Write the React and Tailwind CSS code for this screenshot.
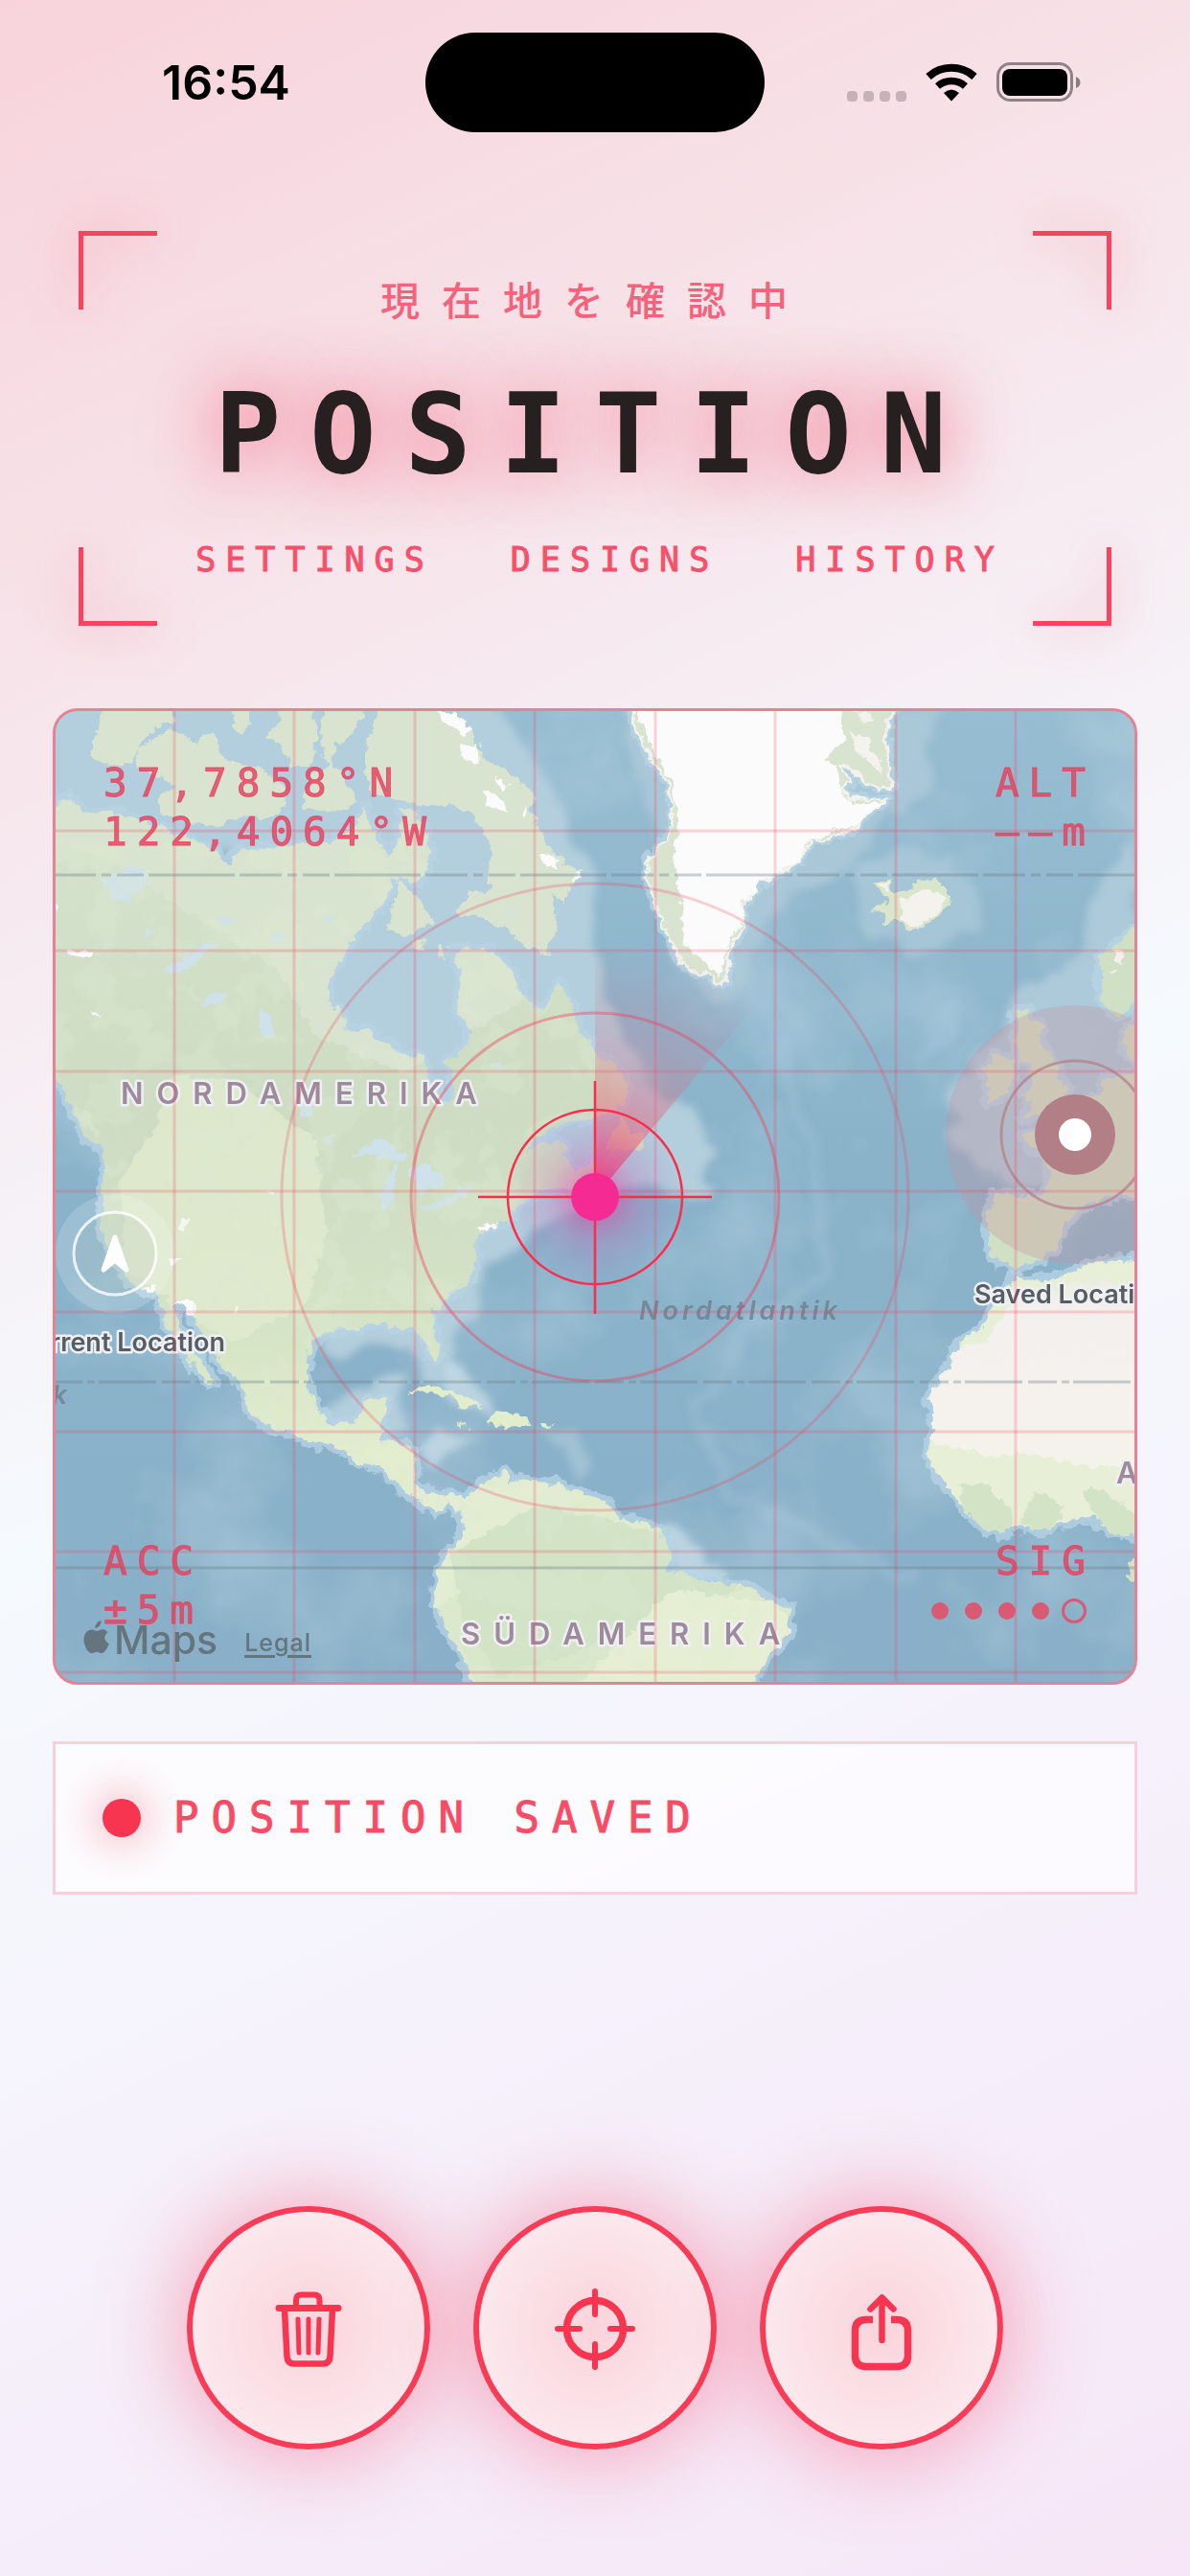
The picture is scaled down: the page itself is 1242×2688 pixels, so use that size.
import React from "react";

const mono = "font-['DejaVu_Sans_Mono','Noto_Sans_CJK_JP',monospace]";

function StatusBar() {
  return (
    <header className="grid h-[172px] grid-cols-3 items-center font-['Inter',sans-serif] text-black">
      <time className="pl-[58px] text-center text-[50px] leading-none font-semibold">16:54</time>
      <div className="h-[104px] w-[354px] justify-self-center rounded-full bg-black" />
      <div className="flex items-center justify-center gap-[20px] pr-[58px]">
        <div className="flex gap-[6px] pt-[28px]" aria-label="No signal">
          {[0, 1, 2, 3].map((i) => (
            <span key={i} className="size-[11px] rounded-[4px] bg-black/20" />
          ))}
        </div>
        <svg viewBox="0 0 54 40" className="h-[40px] w-[54px] shrink-0" aria-label="Wi-Fi">
          <path d="M3 14 A36 36 0 0 1 51 14" fill="none" stroke="#000" strokeWidth="8" />
          <path d="M12.500 24 A22 22 0 0 1 41.500 24" fill="none" stroke="#000" strokeWidth="7.500" />
          <path d="M19 31 Q27 24 35 31 L27 39.500Z" />
        </svg>
        <svg viewBox="0 0 88 42" className="h-[42px] w-[88px] shrink-0" aria-label="Battery full">
          <rect x="1.500" y="1.500" width="77" height="38" rx="13" fill="none" stroke="#000" strokeOpacity=".42" strokeWidth="3" />
          <rect x="6" y="7" width="68" height="28" rx="8" />
          <path d="M83 15 Q87.500 17 87.500 21 Q87.500 25 83 27Z" fillOpacity=".45" />
        </svg>
      </div>
    </header>
  );
}

function Hero() {
  const corner = "absolute size-[82px] border-[#f9435f] drop-shadow-[0_0_24px_rgba(248,60,90,0.6)]";
  return (
    <section className={`relative mx-[82px] mt-[69px] pt-[42px] pb-[47px] text-center ${mono}`}>
      <span className={`${corner} top-0 left-0 border-t-[5px] border-l-[5px]`} />
      <span className={`${corner} top-0 right-0 border-t-[5px] border-r-[5px]`} />
      <span className={`${corner} bottom-0 left-0 border-b-[5px] border-l-[5px]`} />
      <span className={`${corner} right-0 bottom-0 border-r-[5px] border-b-[5px]`} />
      <p className="font-['Noto_Sans_CJK_JP',sans-serif] text-[41px] leading-[56px] font-medium tracking-[23px] text-[#f4637c]" lang="ja">
        現在地を確認中
      </p>
      <h1 className="mt-[54px] text-[115px] leading-[120px] font-bold tracking-[30px] whitespace-nowrap text-[#272021] [text-shadow:0_0_60px_rgba(250,60,95,0.5),0_0_90px_rgba(250,60,95,0.4)]">
        POSITION
      </h1>
      <nav className="mt-[49px] flex justify-center gap-[80px] pl-[10px] text-[35px] leading-[44px] tracking-[10px] text-[#f7506b] [-webkit-text-stroke:1px]">
        <a href="#settings">SETTINGS</a>
        <a href="#designs">DESIGNS</a>
        <a href="#history">HISTORY</a>
      </nav>
    </section>
  );
}

const MAINLAND =
  "M50 847 L71 830 L90 848 L112 846 L136 850 L166 862 L193 873 L210 880 L224 887 L239 902 L247 887 L285 883 L323 880 L345 880 L365 867 L381 843 L386 860 L396 880 L405 895 L413 880 L417 867 L419 843 L434 847 L444 868 L451 890 L446 907 L434 920 L420 915 L410 913 L407 930 L404 937 L390 955 L377 967 L366 982 L358 997 L350 1008 L344 1020 L344 1047 L358 1057 L361 1073 L384 1073 L407 1090 L425 1100 L442 1102 L446 1120 L455 1138 L461 1150 L472 1145 L475 1130 L465 1107 L488 1093 L490 1073 L476 1053 L482 1020 L478 1005 L472 993 L488 987 L515 993 L534 1010 L545 1040 L556 1046 L568 1053 L576 1038 L583 1023 L595 1043 L600 1060 L606 1077 L626 1103 L643 1110 L656 1130 L652 1148 L638 1160 L612 1168 L585 1170 L560 1186 L545 1200 L575 1190 L590 1192 L590 1210 L600 1222 L640 1205 L632 1222 L600 1245 L587 1238 L564 1241 L550 1254 L537 1259 L528 1275 L514 1277 L495 1291 L494 1300 L499 1313 L491 1334 L476 1346 L465 1356 L451 1370 L455 1395 L459 1413 L453 1420 L446 1406 L440 1390 L430 1384 L418 1386 L400 1379 L388 1380 L377 1386 L360 1385 L346 1388 L325 1399 L321 1420 L319 1441 L331 1470 L346 1484 L373 1482 L381 1463 L404 1457 L400 1481 L396 1502 L423 1506 L434 1516 L432 1545 L446 1559 L469 1557 L484 1566 L499 1547 L515 1542 L528 1534 L530 1548 L540 1542 L553 1543 L587 1549 L614 1559 L630 1564 L647 1584 L681 1590 L695 1606 L702 1624 L695 1638 L735 1647 L785 1656 L800 1668 L823 1677 L825 1702 L808 1720 L792 1745 L788 1765 L498 1765 L495 1757 L484 1731 L470 1705 L461 1691 L453 1670 L459 1634 L470 1615 L482 1606 L482 1581 L469 1567 L457 1577 L434 1563 L415 1549 L400 1531 L373 1524 L342 1504 L327 1506 L304 1495 L273 1484 L258 1470 L254 1445 L235 1427 L224 1413 L205 1381 L199 1363 L183 1357 L187 1385 L205 1410 L224 1443 L212 1438 L193 1413 L180 1392 L172 1374 L162 1349 L136 1338 L117 1309 L107 1288 L105 1256 L109 1220 L107 1200 L90 1187 L78 1163 L63 1130 L50 1110Z";

const ISLANDS = [
  "M107 735 L182 735 L180 752 L165 758 L151 770 L138 793 L109 798 L94 788 L103 757Z",
  "M178 757 L197 767 L205 777 L212 765 L224 763 L230 780 L235 793 L270 800 L300 820 L296 838 L285 853 L254 850 L224 863 L200 858 L174 850 L162 837 L168 825 L185 823 L160 806 L143 800 L143 783Z",
  "M245 735 L264 735 L260 757 L252 765 L240 752Z",
  "M289 735 L327 735 L331 770 L323 798 L304 798 L296 780 L279 767 L290 755Z",
  "M337 735 L390 735 L377 748 L365 767 L352 777 L346 800 L335 787Z",
  "M342 797 L358 805 L373 837 L350 848 L318 842 L315 828 L325 812Z",
  "M396 735 L457 735 L470 750 L492 763 L498 780 L507 790 L534 807 L548 822 L560 827 L552 842 L560 860 L576 887 L590 900 L606 907 L596 925 L591 940 L576 930 L578 950 L583 973 L572 982 L574 999 L553 987 L530 972 L507 957 L476 953 L488 933 L511 927 L508 905 L515 887 L504 865 L488 847 L472 837 L447 840 L423 837 L400 830 L384 823 L381 787Z",
  "M417 917 L430 930 L446 950 L453 967 L440 965 L430 972 L419 977 L404 967 L410 945Z",
  "M434 980 L446 978 L440 990 L432 990Z",
  "M459 988 L466 988 L465 1000 L458 998Z",
];

const EUROPE = [
  "M1196 960 L1175 975 L1160 990 L1148 997 L1148 1020 L1150 1047 L1167 1060 L1180 1050 L1196 1030Z",
  "M1037 1100 L1058 1103 L1056 1125 L1052 1140 L1040 1145 L1029 1150 L1032 1135 L1026 1117Z",
  "M1060 1053 L1072 1053 L1074 1063 L1089 1067 L1083 1087 L1090 1092 L1106 1113 L1106 1127 L1117 1137 L1106 1153 L1085 1160 L1066 1167 L1080 1150 L1066 1140 L1078 1130 L1075 1107 L1064 1105 L1060 1087Z",
  "M1196 1118 L1165 1122 L1152 1127 L1148 1140 L1129 1150 L1114 1167 L1095 1175 L1068 1183 L1072 1195 L1091 1203 L1095 1230 L1091 1245 L1060 1246 L1037 1245 L1031 1266 L1033 1313 L1046 1314 L1060 1322 L1087 1313 L1100 1302 L1106 1291 L1110 1277 L1129 1259 L1150 1250 L1196 1244Z",
  "M1196 1060 L1178 1070 L1172 1085 L1175 1100 L1196 1108Z",
];

const AFRICA =
  "M1196 1312 L1160 1315 L1129 1320 L1110 1332 L1091 1334 L1070 1336 L1060 1329 L1052 1345 L1034 1362 L1026 1384 L1012 1394 L999 1402 L994 1420 L984 1431 L978 1446 L968 1459 L976 1484 L972 1500 L968 1516 L980 1541 L1007 1574 L1022 1590 L1041 1600 L1060 1592 L1091 1595 L1112 1587 L1137 1582 L1150 1590 L1160 1600 L1196 1604Z";

const GREENLAND =
  "M658 735 L664 760 L674 780 L684 798 L693 807 L698 820 L700 830 L702 860 L690 880 L674 900 L677 923 L687 950 L692 968 L704 990 L712 1004 L723 1013 L738 1014 L750 1027 L758 1020 L760 1000 L762 983 L770 975 L777 967 L775 940 L785 933 L790 922 L800 917 L830 903 L838 888 L846 880 L844 870 L857 877 L892 863 L905 848 L926 835 L900 831 L884 833 L880 822 L888 815 L875 795 L890 803 L905 815 L930 823 L928 795 L924 760 L938 735Z";

const LAKES = [
  "M365 1208 L382 1194 L396 1185 L408 1195 L426 1205 L420 1213 L404 1208 L390 1205Z",
  "M398 1262 L396 1245 L402 1228 L418 1212 L412 1235 L406 1262Z",
  "M424 1218 L446 1214 L462 1228 L458 1240 L446 1236 L440 1250 L434 1232Z",
  "M438 1259 L466 1251 L478 1240 L492 1238 L484 1247 L462 1258 L446 1266Z",
  "M164 1012 L182 1005 L196 994 L212 982 L230 982 L215 994 L204 1005 L190 1013Z",
  "M116 938 L112 924 L100 918 L122 912 L132 904 L148 904 L158 916 L142 928 L134 940Z",
  "M210 1048 L222 1036 L240 1036 L226 1046Z",
  "M272 1052 L282 1058 L286 1074 L278 1086 L272 1074Z",
  "M307 1128 L322 1134 L328 1160 L318 1164 L310 1150Z",
  "M284 972 L296 970 L292 984 L282 980Z",
  "M230 956 L244 960 L240 966 L230 962Z",
  "M152 965 L162 974 L154 976Z",
  "M334 958 L350 956 L344 961Z",
  "M526 950 L534 948 L528 960Z",
  "M510 1110 L524 1106 L520 1116Z",
  "M338 1190 L350 1178 L344 1194Z",
];

const TUNDRA = "M40 700 H640 V980 L520 1060 L420 1120 L330 1080 L290 1010 L240 980 L180 940 L120 900 L40 870Z";
const columns = [182, 307, 433, 558, 684, 809, 935, 1060];
const rows = [866, 991, 1117, 1242, 1368, 1493, 1618, 1744];

function MapArt() {
  return (
    <svg viewBox="58 741 1126 1013" className="block h-auto w-full font-['Inter',sans-serif]" aria-label="Map of the North Atlantic">
      <defs>
        <filter id="rough" x="-5%" y="-5%" width="110%" height="110%">
          <feTurbulence type="fractalNoise" baseFrequency=".09" numOctaves="3" seed="4" result="n" />
          <feDisplacementMap in="SourceGraphic" in2="n" scale="13" xChannelSelector="R" yChannelSelector="G" />
        </filter>
        <filter id="soft" x="-10%" y="-10%" width="120%" height="120%">
          <feTurbulence type="fractalNoise" baseFrequency=".02" numOctaves="3" seed="8" result="n" />
          <feDisplacementMap in="SourceGraphic" in2="n" scale="40" xChannelSelector="R" yChannelSelector="G" />
          <feGaussianBlur stdDeviation="4" />
        </filter>
        <filter id="mottle" x="0" y="0" width="100%" height="100%">
          <feTurbulence type="fractalNoise" baseFrequency=".022" numOctaves="4" seed="12" />
          <feColorMatrix values="0 0 0 0 .72  0 0 0 0 .82  0 0 0 0 .66  12 0 0 0 -6.2" />
        </filter>
        <filter id="seafloor" x="0" y="0" width="100%" height="100%">
          <feTurbulence type="fractalNoise" baseFrequency=".007" numOctaves="4" seed="21" />
          <feColorMatrix values="0 0 0 0 .68  0 0 0 0 .82  0 0 0 0 .88  3 0 0 0 -1.4" />
        </filter>
        <linearGradient id="sea" x1="0" y1="0" x2="0" y2="1">
          <stop offset="0" stopColor="#97bdd1" />
          <stop offset=".45" stopColor="#8ab3ca" />
          <stop offset="1" stopColor="#89b0c8" />
        </linearGradient>
        <linearGradient id="ground" gradientUnits="userSpaceOnUse" x1="0" y1="860" x2="0" y2="1740">
          <stop offset="0" stopColor="#d5e2cd" />
          <stop offset=".35" stopColor="#cddcc2" />
          <stop offset=".6" stopColor="#d5e4c6" />
          <stop offset=".75" stopColor="#e3edcf" />
          <stop offset="1" stopColor="#d8e7ca" />
        </linearGradient>
        <linearGradient id="sahara" gradientUnits="userSpaceOnUse" x1="0" y1="1320" x2="0" y2="1520">
          <stop offset="0" stopColor="#e3ecd6" />
          <stop offset=".2" stopColor="#f4f0ed" />
          <stop offset=".8" stopColor="#f5f1ed" />
          <stop offset="1" stopColor="#f4f3ea" />
        </linearGradient>
        <radialGradient id="sweep" gradientUnits="userSpaceOnUse" cx="621" cy="1248" r="270">
          <stop offset="0" stopColor="#f52b6d" stopOpacity=".9" />
          <stop offset=".25" stopColor="#f0506f" stopOpacity=".52" />
          <stop offset=".55" stopColor="#dc6a86" stopOpacity=".28" />
          <stop offset="1" stopColor="#c87490" stopOpacity="0" />
        </radialGradient>
        <radialGradient id="pulse">
          <stop offset="0" stopColor="#f52b93" stopOpacity=".7" />
          <stop offset=".5" stopColor="#d050b0" stopOpacity=".24" />
          <stop offset="1" stopColor="#b060d0" stopOpacity="0" />
        </radialGradient>
        <clipPath id="land"><path d={MAINLAND} /></clipPath>
        <clipPath id="africa"><path d={AFRICA} /></clipPath>
      </defs>

      <rect x="56" y="739" width="1130" height="1018" fill="url(#sea)" />
      <rect x="56" y="739" width="1130" height="1018" filter="url(#seafloor)" opacity=".25" />

      <g filter="url(#soft)" fill="#b3cedc">
        <path d="M40 700 L480 700 L560 800 L600 870 L625 940 L620 1000 L640 1060 L670 1120 L700 1150 L745 1190 L750 1240 L700 1250 L650 1240 L580 1275 L520 1310 L500 1350 L480 1380 L475 1450 L440 1440 L420 1400 L330 1410 L340 1120 L300 900 L40 850Z" />
        <path d="M650 735 L690 900 L700 1000 L740 1050 L780 1030 L800 960 L880 900 L960 830 L990 735Z" opacity=".65" />
        <path d="M890 900 L960 880 L1030 920 L1020 970 L950 1000 L900 970Z" opacity=".6" />
        <path d="M1190 880 L1130 940 L1110 1020 L1060 1040 L1000 1140 L990 1190 L1060 1240 L1190 1240Z" opacity=".8" />
        <path d="M340 1480 L370 1450 L420 1440 L410 1500Z" />
      </g>
      <g filter="url(#soft)" fill="none" stroke="#a9cadd" strokeWidth="14" strokeOpacity=".3">
        <path d="M780 1020 L850 1190 L860 1330 L780 1380 L730 1470 L760 1560 L860 1600 L960 1650" />
        <path d="M960 1110 Q1000 1070 990 1040" />
      </g>
      <g filter="url(#soft)" fill="#c6dbe6" opacity=".8">
        <path d="M460 1420 L490 1420 L500 1450 L530 1480 L500 1470 L470 1455Z" />
        <path d="M430 1510 L460 1490 L500 1500 L450 1530Z" />
        <path d="M690 1585 L720 1600 L770 1650 L700 1640Z" />
        <path d="M560 1490 L600 1490 L615 1530 L605 1550 L595 1510Z" opacity=".5" />
      </g>
      <g filter="url(#rough)" fill="none" stroke="#b8d4e6" strokeWidth="12" strokeOpacity=".75" strokeLinejoin="round">
        <path d={MAINLAND} />
        <path d={AFRICA} />
        {EUROPE.map((d) => <path key={d} d={d} />)}
        <path d={GREENLAND} />
      </g>

      <g filter="url(#rough)">
        <path d={MAINLAND} fill="url(#ground)" />
        <g clipPath="url(#land)">
          <path d={TUNDRA} fill="#d8e4cf" />
          <path d="M180 1120 L250 1130 L330 1190 L340 1290 L320 1360 L240 1400 L180 1360 L130 1320 L125 1230 L160 1180Z" fill="#e1ebcf" opacity=".75" />
          <path d="M420 1555 L480 1550 L590 1545 L600 1580 L550 1610 L500 1640 L455 1680 L480 1720 L500 1760 L400 1760Z" fill="#e2edd2" />
          <path d="M470 1620 L560 1570 L700 1600 L780 1650 L700 1690 L640 1710 L520 1750 L480 1680Z" fill="#d2e3c6" />
          <path d="M700 1660 L810 1670 L830 1700 L780 1760 L600 1760 L650 1710Z" fill="#e6efd3" />
        </g>
        {ISLANDS.map((d) => <path key={d} d={d} fill="#d8e4cf" />)}
        <path d={GREENLAND} fill="#d9e4d0" stroke="#f4f2ed" strokeWidth="3" />
        <path d="M661 735 L680 780 L702 815 L708 860 L704 900 L712 950 L714 985 L735 1003 L752 1018 L760 980 L776 960 L774 940 L800 915 L830 901 L844 876 L890 861 L922 838 L880 834 L874 800 L862 790 L880 770 L880 735Z" fill="#fbfbfc" />
        <path d="M885 760 L905 770 L915 800 L900 790Z M890 740 L910 745 L905 755Z M905 780 L920 790 L922 810Z" fill="#f4f2ed" />
        <path d="M911 920 L926 917 L934 933 L953 922 L976 913 L984 925 L993 937 L984 953 L970 962 L953 970 L935 960 L922 963 L924 950 L911 947 L928 940Z" fill="#d9e6cc" />
        <path d="M940 940 L965 925 L985 935 L982 950 L955 966 L938 958Z M915 922 L926 920 L930 930Z" fill="#f4f2ed" />
        {EUROPE.map((d) => <path key={d} d={d} fill="#cfe0c4" />)}
        <path d="M1162 990 L1170 992 L1172 1004 L1162 1003Z M1158 1012 L1168 1013 L1160 1016Z" fill="#f8efed" />
        <path d={AFRICA} fill="#e7f0d6" />
        <g clipPath="url(#africa)">
          <path d="M960 1410 L1030 1400 L1060 1350 L1100 1345 L1140 1330 L1200 1350 L1200 1525 L1140 1530 L1070 1515 L1040 1520 L960 1500Z" fill="url(#sahara)" />
          <path d="M1000 1550 L1030 1548 L1060 1580 L1050 1610 L1010 1590Z M1065 1590 L1080 1555 L1110 1570 L1100 1600Z M1130 1555 L1150 1552 L1190 1585 L1190 1610 L1150 1600Z" fill="#d2e3c6" />
        </g>
        <path d="M1190 1618 L1178 1630 L1176 1645 L1190 1660Z" fill="#d2e3c6" />
        <path d="M423 1454 L440 1446 L453 1445 L480 1455 L505 1468 L480 1466 L470 1456 L453 1452 L430 1453Z M507 1486 L518 1472 L540 1474 L557 1486 L530 1488Z M566 1484 L578 1485 L572 1489 L566 1488Z M477 1485 L488 1486 L484 1490Z" fill="#e2edcb" />
        <path d="M78 1148 L96 1168 L106 1186 L98 1184 L82 1166Z" fill="#d5e2cd" />
        <path d="M648 1162 L658 1180 L674 1182 L668 1200 L630 1198 L640 1180Z" fill="#d7dfbd" />
        <g fill="#cfe1ea">{LAKES.map((d) => <path key={d} d={d} />)}</g>
        <g fill="#fbfbfc">
          <path d="M457 741 L482 745 L491 762 L484 766 L464 752Z M482 778 L498 774 L500 795 L484 792Z M504 824 L520 830 L527 846 L508 838Z M516 808 L530 820 L526 824Z M544 850 L553 840 L548 852Z M562 890 L580 894 L584 908 L572 904Z M594 918 L602 908 L606 912 L598 920Z" />
          <path d="M96 1050 L104 1062 L98 1060Z M72 992 L100 990 L94 996 L76 998Z M57 938 L62 942 L57 948Z" />
          <path d="M188 1268 L198 1270 L194 1284 L188 1282Z M174 1314 L194 1312 L180 1318Z M182 1358 L202 1356 L204 1374 L194 1364Z M148 1344 L164 1342 L160 1348Z M244 1364 L250 1363 L250 1370Z M498 1280 L520 1274 L506 1284Z M278 1244 L286 1243 L284 1247Z" />
        </g>
      </g>
      <g clipPath="url(#land)">
        <rect x="56" y="860" width="760" height="896" filter="url(#mottle)" opacity=".3" />
      </g>

      <g stroke="#6b7c85" strokeOpacity=".35" strokeWidth="3">
        <line x1="56" y1="912" x2="1186" y2="912" strokeDasharray="44 6 10 6 28 5 90 5" />
        <line x1="56" y1="1441" x2="1186" y2="1441" strokeDasharray="30 5 8 4 60 6" />
        <line x1="56" y1="1635" x2="1186" y2="1635" />
      </g>

      <g fill="#9d8b9b" stroke="#eef0f3" strokeWidth="5" strokeLinejoin="round" paintOrder="stroke" fontSize="31" fontWeight="600" letterSpacing="14">
        <text x="126" y="1151">NORDAMERIKA</text>
        <text x="481" y="1715">SÜDAMERIKA</text>
        <text x="1165" y="1547">A</text>
      </g>
      <g fill="#6d8391" fillOpacity=".85" fontStyle="italic" fontWeight="600" fontSize="27">
        <text x="667" y="1376" letterSpacing="4">Nordatlantik</text>
        <text x="70" y="1464" textAnchor="end">k</text>
      </g>

      <circle cx="1122" cy="1183" r="135" fill="#c98f9a" fillOpacity=".3" />
      <circle cx="1122" cy="1183" r="77" fill="none" stroke="#b27f87" strokeWidth="3" strokeOpacity=".7" />
      <circle cx="1122" cy="1183" r="42" fill="#b27f87" />
      <circle cx="1122" cy="1183" r="17" fill="#fff" />
      <circle cx="120" cy="1307" r="62" fill="#fff" fillOpacity=".17" />
      <circle cx="120" cy="1307" r="43" fill="#7b9c8c" fillOpacity=".12" stroke="#fff" strokeOpacity=".8" strokeWidth="3" />
      <path d="M120 1290 L132 1324 L120 1314 L108 1324Z" fill="#fff" stroke="#fff" strokeWidth="5" strokeLinejoin="round" />
      <g fill="#575d63" stroke="#eef0f3" strokeWidth="5" strokeLinejoin="round" paintOrder="stroke" fontSize="27" fontWeight="600">
        <text x="235" y="1409" textAnchor="end">Current Location</text>
        <text x="1017" y="1359">Saved Location</text>
      </g>

      <g stroke="#f43a58" strokeOpacity=".22" strokeWidth="3">
        {columns.map((x) => <line key={x} x1={x} y1="739" x2={x} y2="1757" />)}
        {rows.map((y) => <line key={y} x1="56" y1={y} x2="1186" y2={y} />)}
      </g>
      <path d="M621 1248 L621 960 A288 288 0 0 1 806 1027Z" fill="url(#sweep)" />
      <circle cx="621" cy="1248" r="92" fill="url(#pulse)" />
      <g fill="none" stroke="#f43a58">
        <circle cx="621" cy="1248" r="327" strokeOpacity=".24" strokeWidth="3" />
        <circle cx="621" cy="1248" r="192" strokeOpacity=".4" strokeWidth="3" />
        <circle cx="621" cy="1248" r="91" stroke="#fb2d4c" strokeWidth="2.500" />
        <path d="M621 1127 V1370 M499 1248 H743" stroke="#fb2d4c" strokeWidth="2.500" />
      </g>
      <circle cx="621" cy="1248" r="25" fill="#f52b93" />
    </svg>
  );
}

function MapCard() {
  return (
    <section className="relative mx-[55px] mt-[86px] overflow-hidden rounded-[26px] border-[3px] border-[#ea8093] bg-[#8ab2ca]">
      <MapArt />
      <div className="absolute bottom-[18px] left-[29px] flex items-baseline gap-[28px] font-['Inter',sans-serif] text-[#64757e]">
        <span className="flex items-baseline gap-[5px] text-[41px] leading-[52px] font-medium">
          <svg viewBox="0 0 27 35" className="h-[35px] w-[27px] fill-current" aria-label="Apple">
            <path d="M18.500 0 C18.900 4 15.500 8.200 12.300 8 C12 4.500 15 .8 18.500 0Z M25.500 12.500 C20.800 15.500 21.600 22 26.800 24 C25.500 28 22.500 33.500 19.500 34 C17.500 34.300 16.500 32.700 14 32.700 C11.300 32.700 10.300 34.400 8.300 34 C4.500 33.500 .5 26 .5 20 C.5 13.500 4.500 9.500 8.800 9.500 C11.300 9.500 12.800 11 14.300 11 C15.900 11 17.400 9.300 20.300 9.300 C22.500 9.300 24.300 10.600 25.500 12.500Z" />
          </svg>
          Maps
        </span>
        <a href="#legal" className="-translate-y-[3px] text-[25px] font-medium tracking-[1px] underline decoration-[3px] underline-offset-[4px]">Legal</a>
      </div>
      <div className={`pointer-events-none absolute inset-0 flex flex-col justify-between pt-[50px] pr-[41px] pb-[49px] pl-[50px] text-[41px] leading-[51px] tracking-[10px] text-[#e6405e]/80 [-webkit-text-stroke:1px] ${mono}`}>
        <div className="flex justify-between">
          <p>37,7858°N<br />122,4064°W</p>
          <p className="text-right">ALT<br />––m</p>
        </div>
        <div className="flex justify-between">
          <p>ACC<br />±5m</p>
          <div className="text-right">
            <p>SIG</p>
            <div className="flex h-[51px] items-center justify-end gap-[17px] pr-[9px]" role="img" aria-label="Signal 4 of 5">
              {[0, 1, 2, 3].map((i) => (
                <span key={i} className="size-[18px] rounded-full bg-[#d95a73]" />
              ))}
              <span className="-ml-[4px] size-[26px] rounded-full border-[3px] border-[#d95a73]" />
            </div>
          </div>
        </div>
      </div>
    </section>
  );
}

function StatusPanel() {
  return (
    <section role="status" className="mx-[55px] mt-[59px] flex h-[160px] items-center gap-[34px] border-[3px] border-[#f9d0d9] bg-white/65 pl-[49px]">
      <span className="size-[40px] rounded-full bg-[#f73550] shadow-[0_0_44px_8px_rgba(247,53,80,0.32)]" />
      <span className={`text-[44px] leading-[56px] tracking-[13px] whitespace-nowrap text-[#f84c66] [-webkit-text-stroke:1px] ${mono}`}>POSITION SAVED</span>
    </section>
  );
}

function RoundButton({ label, children }) {
  return (
    <button
      type="button"
      aria-label={label}
      className="grid size-[254px] place-items-center rounded-full border-[6px] border-[#f83b56] bg-[radial-gradient(closest-side,#fbd3db_0%,#fbdee4_50%,#fbe8ed_100%)] text-[#f83550] shadow-[0_0_90px_6px_rgba(248,59,90,0.42)]"
    >
      <svg viewBox="0 0 130 130" className="size-[130px]" fill="none" stroke="currentColor" strokeLinecap="round" strokeLinejoin="round">
        {children}
      </svg>
    </button>
  );
}

function Actions() {
  return (
    <section className="mt-auto flex justify-center gap-[45px] pt-[60px] pb-[132px]">
      <RoundButton label="Delete">
        <path d="M34 44.500 H96" strokeWidth="7" />
        <path d="M52 42 V36 Q52 30.500 57.500 30.500 H71 Q76.500 30.500 76.500 36 V42" strokeWidth="6" />
        <path d="M40 46 L42.500 95 Q43 102.500 50 102.500 H80 Q87 102.500 87.500 95 L90 46" strokeWidth="6.500" />
        <path d="M54 56 L55 91 M65 56 V91 M76 56 L75 91" strokeWidth="5" />
      </RoundButton>
      <RoundButton label="Locate">
        <circle cx="65" cy="66" r="29.500" strokeWidth="7.500" />
        <path d="M65 27 V51 M65 82 V106 M26 66 H49 M81 66 H104" strokeWidth="6" />
      </RoundButton>
      <RoundButton label="Share">
        <path d="M56 56.500 H49 Q37.500 56.500 37.500 68 V94 Q37.500 105.500 49 105.500 H81 Q92.500 105.500 92.500 94 V68 Q92.500 56.500 81 56.500 H75" strokeWidth="7.500" strokeLinecap="butt" />
        <path d="M65.500 34 V78 M53.500 45.500 L65.500 33.500 L77.500 45.500" strokeWidth="6.500" />
      </RoundButton>
    </section>
  );
}

export default function App() {
  return (
    <main className="flex min-h-screen flex-col overflow-hidden bg-[linear-gradient(155deg,#f8d3db_0%,#f5fafe_50%,#f6e6f7_100%)]">
      <StatusBar />
      <Hero />
      <MapCard />
      <StatusPanel />
      <Actions />
    </main>
  );
}
